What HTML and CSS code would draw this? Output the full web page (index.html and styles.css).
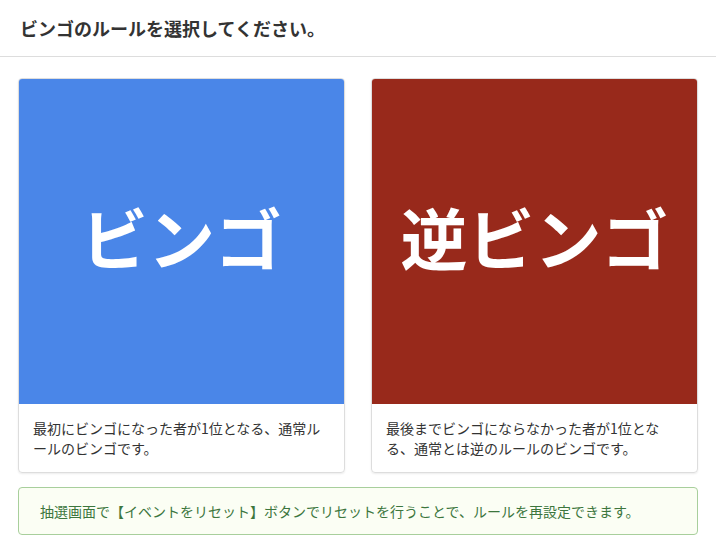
FILE: index.html
```html
<!DOCTYPE html>
<html lang="ja">
<head>
    <meta charset="UTF-8">
    <meta name="viewport" content="width=device-width, initial-scale=1.0">
    <title>ビンゴ - ルール選択</title>
    <link rel="stylesheet" href="styles.css">
</head>
<body>

<header class="page-header">
    <h1>ビンゴのルールを選択してください。</h1>
</header>

<main class="rule-select">
    <div class="rule-list">
        <a class="rule-card" href="#normal">
            <div class="rule-visual normal">ビンゴ</div>
            <p class="rule-desc">最初にビンゴになった者が1位となる、通常ルールのビンゴです。</p>
        </a>
        <a class="rule-card" href="#reverse">
            <div class="rule-visual reverse">逆ビンゴ</div>
            <p class="rule-desc">最後までビンゴにならなかった者が1位となる、通常とは逆のルールのビンゴです。</p>
        </a>
    </div>

    <div class="notice">
        抽選画面で【イベントをリセット】ボタンでリセットを行うことで、ルールを再設定できます。
    </div>
</main>

</body>
</html>
```

FILE: styles.css
```css
body {
    font-family: "Noto Sans CJK JP", "Noto Sans", sans-serif;
    margin: 0;
    padding: 0;
    background-color: #fff;
    color: #333;
}
.page-header {
    height: 57px;
    border-bottom: 1px solid #ddd;
    display: flex;
    align-items: center;
    padding: 0 20px;
    box-sizing: border-box;
}
.page-header h1 {
    margin: 0 0 1px;
    font-size: 18px;
    font-weight: bold;
    color: #333;
}
.rule-select {
    padding: 21px 18px 0;
}
.rule-list {
    display: grid;
    grid-template-columns: 1fr 1fr;
    gap: 26px;
}
.rule-card {
    display: block;
    border: 1px solid #ddd;
    border-radius: 4px;
    overflow: hidden;
    box-shadow: 0 1px 2px rgba(0, 0, 0, 0.08);
    text-decoration: none;
    color: #333;
}
.rule-visual {
    height: 325px;
    box-sizing: border-box;
    padding-bottom: 12px;
    display: flex;
    align-items: center;
    justify-content: center;
    color: #fff;
    font-size: 67px;
    font-weight: bold;
}
.rule-visual.normal {
    background-color: #4a86e8;
}
.rule-visual.reverse {
    background-color: #98291b;
}
.rule-desc {
    margin: 0;
    padding: 14px;
    font-size: 14px;
    line-height: 20px;
    line-break: normal;
}
.notice {
    margin-top: 14px;
    border: 1px solid #a8cf9c;
    border-radius: 4px;
    background-color: #fbfef4;
    color: #3c763d;
    font-size: 14px;
    padding: 13px 21px;
    line-height: 20px;
}
```
